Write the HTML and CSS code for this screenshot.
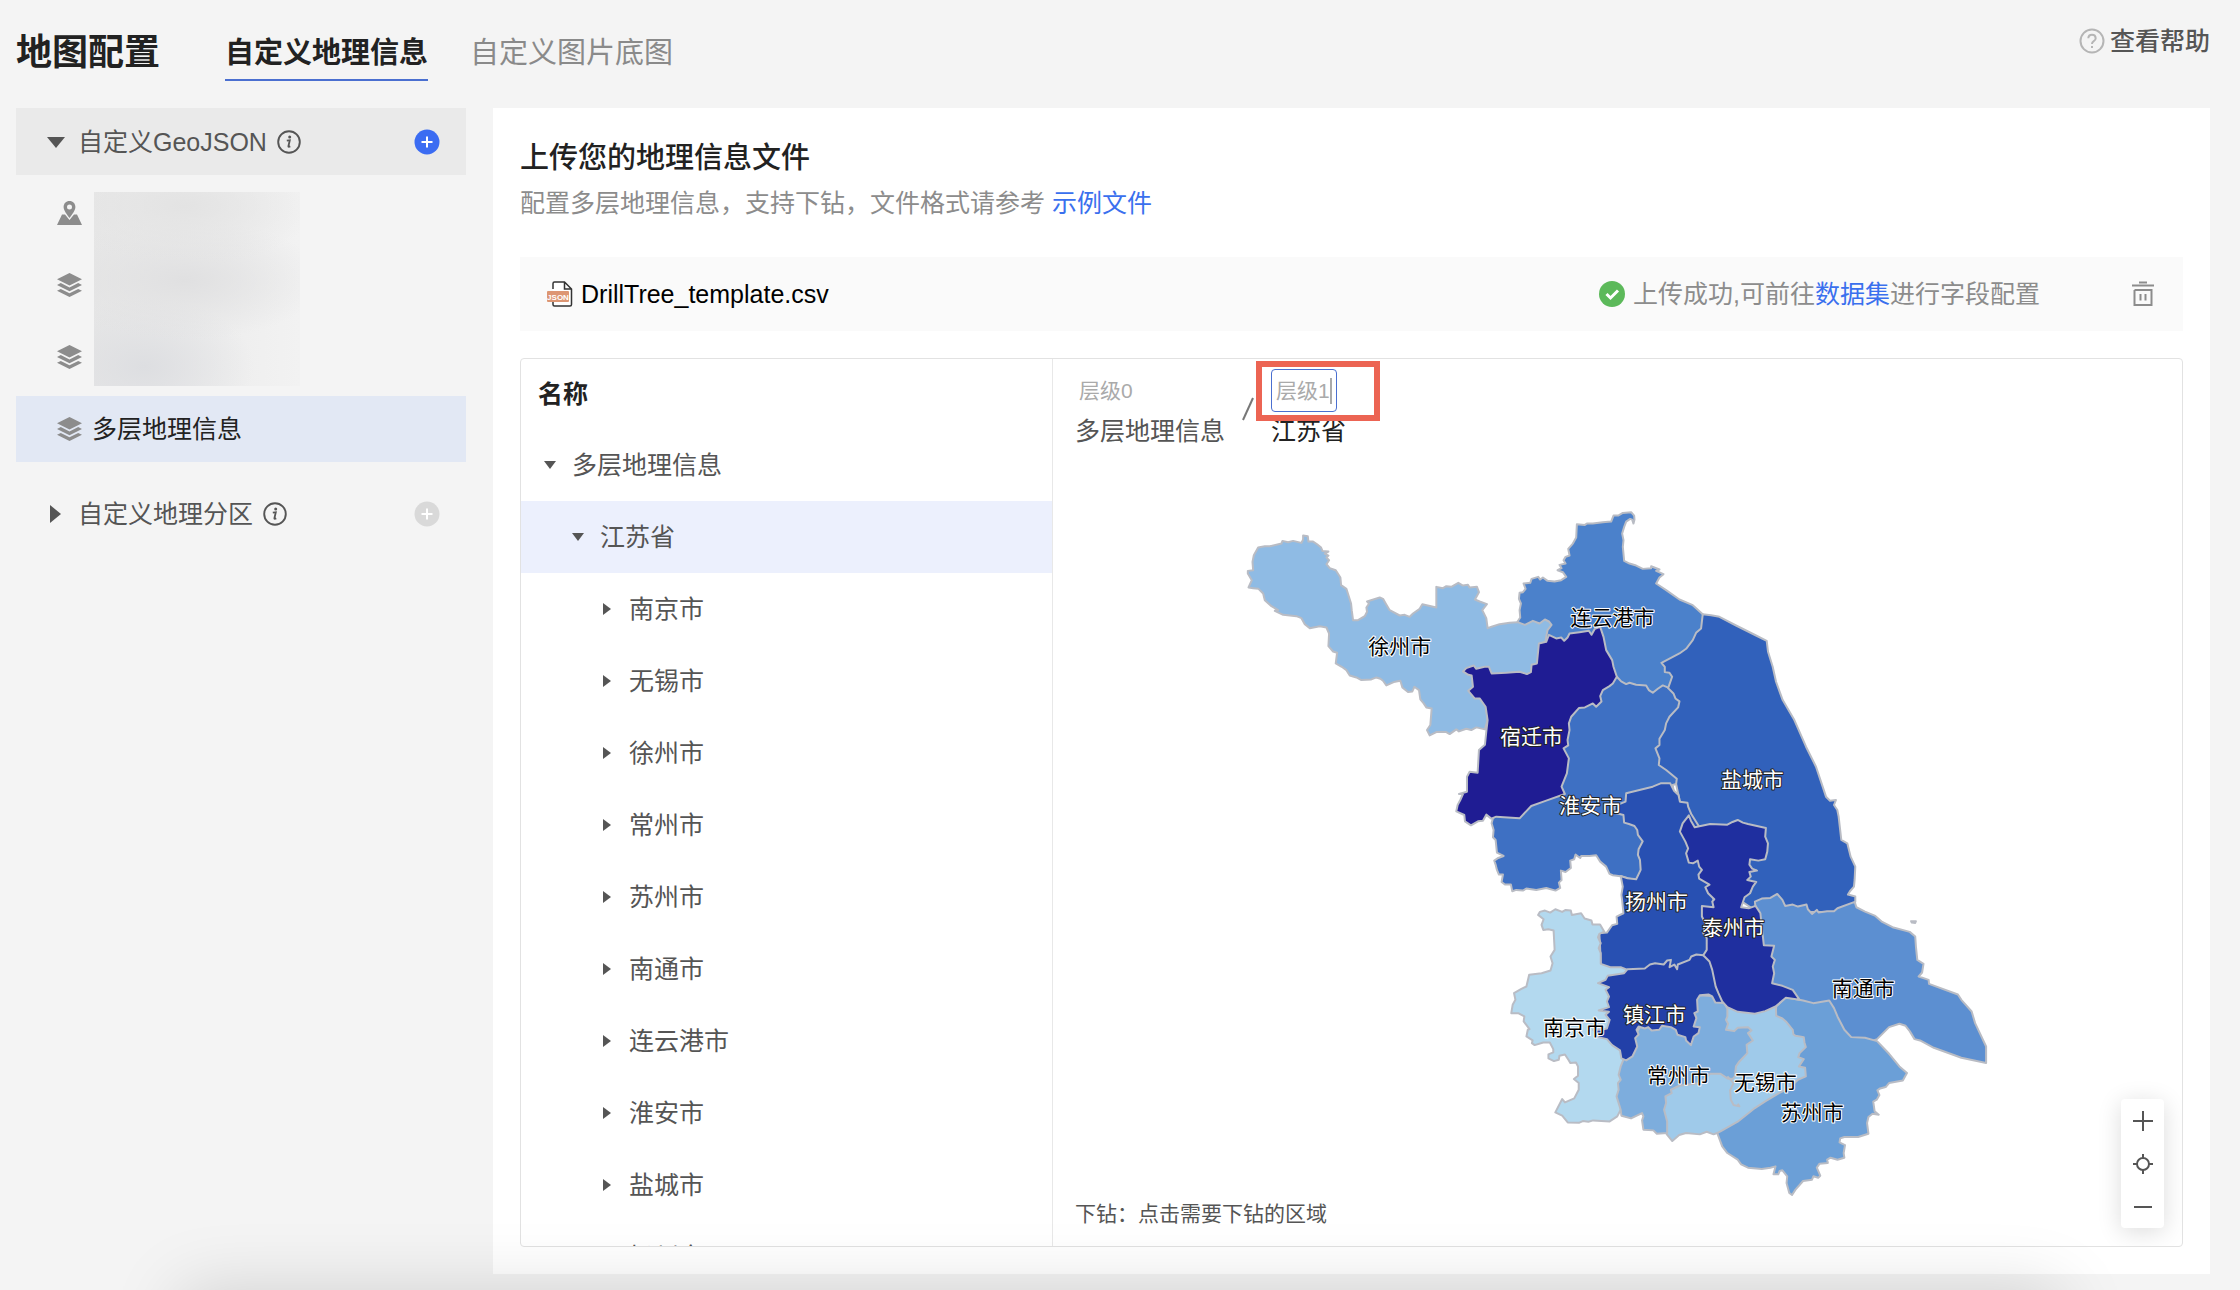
FILE: index.html
```html
<!DOCTYPE html>
<html lang="zh-CN">
<head>
<meta charset="utf-8">
<title>地图配置</title>
<link rel="stylesheet" href="styles.css">
</head>
<body>
<svg class="defs" aria-hidden="true">
  <symbol id="layers" viewBox="0 0 25 24"><path d="M12.500 0 25 6.200 12.500 12.400 0 6.200Z"/><path d="M0 12 3.800 10.100 12.500 14.400 21.200 10.100 25 12 12.500 18.200Z"/><path d="M0 17.800 3.800 15.900 12.500 20.200 21.200 15.900 25 17.800 12.500 24Z"/></symbol>
  <symbol id="info" viewBox="0 0 24 24"><circle cx="12" cy="12" r="10.800" fill="none" stroke="currentColor" stroke-width="1.900"/><circle cx="12.700" cy="7" r="1.500"/><path d="M9.800 10.600 12.800 10.200 11.400 16.300Q11.200 17.300 13.300 16.400" fill="none" stroke="currentColor" stroke-width="1.800"/></symbol>
  <symbol id="plus" viewBox="0 0 26 26"><circle cx="13" cy="13" r="12.500"/><path d="M13 7.500V18.500M7.500 13H18.500" stroke="#fff" stroke-width="2"/></symbol>
</svg>

<header class="topbar">
  <h1 class="page-title">地图配置</h1>
  <nav class="tabs">
    <a class="tab tab-active" href="#geo">自定义地理信息</a>
    <a class="tab" href="#image">自定义图片底图</a>
  </nav>
  <a class="help" href="#help">
    <svg class="icon-help" viewBox="0 0 26 26" aria-hidden="true"><circle cx="13" cy="13" r="11.500"/><path d="M9.300 10.300Q9.500 6.800 13 6.800T16.700 10.200Q16.700 12 14.500 13.300 13 14.200 13 16M13 18V20"/></svg>
    <span>查看帮助</span>
  </a>
</header>

<main class="workspace">
  <aside class="sidebar">
    <div class="group group-open">
      <svg class="twist" viewBox="0 0 18 18" aria-hidden="true"><path d="M0 4H18L9 15Z"/></svg>
      <span>自定义GeoJSON</span>
      <svg class="icon-info" aria-hidden="true"><use href="#info"/></svg>
      <button class="add" type="button" aria-label="新增GeoJSON"><svg aria-hidden="true"><use href="#plus"/></svg></button>
    </div>
    <div class="layer-list">
      <a class="layer" href="#l1" aria-label="图层一"><svg viewBox="0 0 25 24" aria-hidden="true"><path d="M5 13.500 0 24H25L20 13.500H17L12.500 19 8 13.500Z"/><path fill-rule="evenodd" d="M12.500 0C9 0 6.600 2.600 6.600 6 6.600 9.500 9.500 12.500 12.500 17 15.500 12.500 18.400 9.500 18.400 6 18.400 2.600 16 0 12.500 0ZM12.500 3.500A2.500 2.500 0 1 1 12.500 8.500 2.500 2.500 0 1 1 12.500 3.500Z"/></svg></a>
      <a class="layer" href="#l2" aria-label="图层二"><svg aria-hidden="true"><use href="#layers"/></svg></a>
      <a class="layer" href="#l3" aria-label="图层三"><svg aria-hidden="true"><use href="#layers"/></svg></a>
      <a class="layer layer-active" href="#l4"><svg aria-hidden="true"><use href="#layers"/></svg><span>多层地理信息</span></a>
      <div class="redacted"></div>
    </div>
    <div class="group">
      <svg class="twist" viewBox="0 0 18 18" aria-hidden="true"><path d="M3 0V18L14 9Z"/></svg>
      <span>自定义地理分区</span>
      <svg class="icon-info" aria-hidden="true"><use href="#info"/></svg>
      <button class="add add-off" type="button" aria-label="新增地理分区"><svg aria-hidden="true"><use href="#plus"/></svg></button>
    </div>
  </aside>

  <section class="panel">
    <h2 class="panel-title">上传您的地理信息文件</h2>
    <p class="panel-desc">配置多层地理信息，支持下钻，文件格式请参考 <a href="#sample">示例文件</a></p>

    <div class="file">
      <svg class="icon-file" viewBox="0 0 26 26" aria-hidden="true"><path d="M6 8V2.500Q6 1 7.500 1H17.500L24.500 8V23.500Q24.500 25 23 25H7.500Q6 25 6 23.500V21M17.500 1V8H24.500" fill="#fff" stroke="#333" stroke-width="1.500"/><rect x="0" y="10" width="22" height="11" rx="1" fill="#dd9673"/><text x="11" y="18.500" text-anchor="middle">JSON</text></svg>
      <span class="file-name">DrillTree_template.csv</span>
      <svg class="icon-ok" viewBox="0 0 26 26" aria-hidden="true"><circle cx="13" cy="13" r="13"/><path d="M7.500 13 11.500 17 19 9.500"/></svg>
      <p class="file-state">上传成功,可前往<a href="#dataset">数据集</a>进行字段配置</p>
      <button class="remove" type="button" aria-label="删除文件"><svg viewBox="0 0 22 26" aria-hidden="true"><path d="M0 4.500H22M7 1.500H15M2.500 9V24H19.500V9H2.500M8.500 13V19.500M13.500 13V19.500"/></svg></button>
    </div>

    <div class="explorer">
      <div class="tree">
        <h3 class="tree-head">名称</h3>
        <ul class="nodes">
          <li class="node"><svg viewBox="0 0 14 14" aria-hidden="true"><path d="M1 3H13L7 11Z"/></svg>多层地理信息</li>
          <li class="node node-l1 node-active"><svg viewBox="0 0 14 14" aria-hidden="true"><path d="M1 3H13L7 11Z"/></svg>江苏省</li>
          <li class="node node-l2"><svg viewBox="0 0 14 14" aria-hidden="true"><path d="M3 1V13L11 7Z"/></svg>南京市</li>
          <li class="node node-l2"><svg viewBox="0 0 14 14" aria-hidden="true"><path d="M3 1V13L11 7Z"/></svg>无锡市</li>
          <li class="node node-l2"><svg viewBox="0 0 14 14" aria-hidden="true"><path d="M3 1V13L11 7Z"/></svg>徐州市</li>
          <li class="node node-l2"><svg viewBox="0 0 14 14" aria-hidden="true"><path d="M3 1V13L11 7Z"/></svg>常州市</li>
          <li class="node node-l2"><svg viewBox="0 0 14 14" aria-hidden="true"><path d="M3 1V13L11 7Z"/></svg>苏州市</li>
          <li class="node node-l2"><svg viewBox="0 0 14 14" aria-hidden="true"><path d="M3 1V13L11 7Z"/></svg>南通市</li>
          <li class="node node-l2"><svg viewBox="0 0 14 14" aria-hidden="true"><path d="M3 1V13L11 7Z"/></svg>连云港市</li>
          <li class="node node-l2"><svg viewBox="0 0 14 14" aria-hidden="true"><path d="M3 1V13L11 7Z"/></svg>淮安市</li>
          <li class="node node-l2"><svg viewBox="0 0 14 14" aria-hidden="true"><path d="M3 1V13L11 7Z"/></svg>盐城市</li>
          <li class="node node-l2"><svg viewBox="0 0 14 14" aria-hidden="true"><path d="M3 1V13L11 7Z"/></svg>扬州市</li>
        </ul>
      </div>

      <div class="map">
        <svg class="map-canvas" viewBox="1053 359 1130 887" role="img" aria-label="江苏省地图">
          <g class="regions" transform="translate(1480 500) scale(.333333)">
            <path fill="#4b81cb" d="M292 72 316 74 322 70 340 70 370 66 395 64 402 46 416 46 430 38 455 36 464 46 465 58 462 70 458 58 452 56 440 64 434 80 428 100 432 120 430 140 434 182 450 190 470 196 490 206 515 204 515 198 540 208 530 212 552 222 540 232 530 250 560 270 600 298 640 315 670 342 700 400 600 520 580 560 480 620 400 560 360 400 300 420 200 440 150 400 114 364 122 352 120 330 124 310 118 296 120 278 130 276 138 266 132 250 152 248 156 236 176 230 182 238 190 232 204 242 225 244 245 240 260 230 250 216 234 210 246 204 240 194 258 190 252 180 258 170 270 166 266 146 280 130 290 112Z"/>
            <path fill="#3e70c3" d="M412 530 425 544 440 552 450 548 470 554 500 556 508 570 520 578 535 566 550 556 572 565 630 600 630 840 580 855 600 1000 500 1150 428 1130 400 1126 390 1122 380 1100 362 1085 350 1066 330 1068 305 1068 302 1074 288 1064 284 1078 272 1082 274 1104 258 1116 244 1112 246 1140 238 1148 242 1164 228 1172 200 1164 170 1170 140 1166 130 1172 110 1170 98 1174 94 1154 76 1154 66 1146 70 1124 58 1124 52 1110 48 1094 44 1082 56 1074 72 1068 52 1058 48 1020 40 1012 42 990 36 970 40 955 100 900 240 700 240 640 250 600 400 520Z"/>
          </g>
          <g class="regions" transform="translate(1230 490) scale(.333333)">
            <path fill="#8fbbe4" d="M85 172 105 168 120 168 155 160 158 152 175 156 190 152 215 158 220 148 220 136 234 138 236 154 250 154 262 162 274 172 278 182 296 184 285 190 296 196 290 202 298 210 290 222 300 234 318 240 332 262 334 285 350 296 364 340 366 360 370 390 385 390 405 378 412 365 410 352 418 340 412 334 450 322 460 326 468 340 480 360 510 376 525 374 540 380 550 370 570 356 578 342 620 352 620 290 640 294 650 288 665 290 686 278 700 286 715 284 720 292 742 290 748 306 736 328 750 334 772 342 758 360 770 384 774 414 786 410 810 402 840 398 864 396 886 404 910 392 930 400 946 388 958 394 966 404 954 420 950 440 930 560 780 620 770 660 774 690 766 718 740 712 725 720 710 716 688 724 680 718 660 732 650 726 620 726 600 736 592 720 602 705 606 655 590 652 582 640 572 628 568 600 554 590 548 604 535 606 518 592 512 572 500 574 492 576 470 586 460 572 452 566 440 562 425 568 395 570 380 562 360 556 350 540 336 530 318 520 322 488 310 484 296 468 298 430 290 412 270 408 240 414 225 402 215 384 200 378 160 374 135 362 145 360 125 348 105 330 100 310 86 296 70 294 56 292 66 270 54 250 54 242 70 240 68 215 72 195Z"/>
          </g>
          <g class="regions" transform="translate(1480 500) scale(.333333)">
            <path fill="#3161bb" d="M670 342 695 345 720 350 770 376 830 406 862 422 866 455 880 500 890 545 910 600 945 660 980 740 1010 800 1030 860 1040 890 1052 902 1070 900 1064 915 1074 930 1078 950 1086 1020 1104 1030 1114 1070 1128 1100 1126 1140 1124 1160 1112 1174 1106 1184 1128 1190 1128 1206 1100 1236 900 1236 840 1240 780 1200 780 1000 630 980 600 900 590 852 592 836 560 810 538 795 540 775 528 745 540 735 540 716 556 690 560 670 570 650 596 622 600 604 588 595 582 580 566 564 578 530 570 518 556 516 556 500 546 488 600 460 620 446 640 420 650 398 665 385Z"/>
          </g>
          <g class="regions" transform="translate(1230 490) scale(.333333)">
            <path fill="#1f1c93" d="M958 434 980 445 995 442 1004 452 1014 442 1020 430 1050 426 1078 422 1086 434 1096 416 1112 410 1122 440 1130 480 1148 510 1152 530 1162 560 1150 580 1140 588 1120 600 1112 618 1116 634 1100 650 1090 640 1066 652 1048 654 1025 680 1018 700 1020 720 1014 750 1016 766 1002 775 1018 805 1012 850 996 890 1006 912 950 932 905 948 870 985 800 980 785 986 770 974 760 992 745 994 724 1006 706 994 704 975 680 964 684 945 692 930 700 912 688 912 712 905 712 875 712 860 720 845 744 848 748 780 766 764 770 725 774 690 768 650 750 625 735 625 716 602 730 590 726 556 716 554 700 544 710 534 732 526 740 536 765 530 778 530 786 550 830 548 870 545 892 552 904 546 906 524 922 520 928 460 950 455Z"/>
          </g>
          <g class="regions" transform="translate(1480 800) scale(.344388 .333333)">
            <path fill="#5c8fd1" d="M802 325 800 305 820 296 845 294 865 282 880 300 888 318 910 314 925 320 950 314 954 328 966 342 980 330 985 338 1010 334 1030 334 1040 325 1090 306 1095 322 1120 335 1150 348 1170 366 1200 382 1250 396 1266 410 1268 440 1272 480 1290 492 1286 518 1276 530 1305 540 1306 552 1390 584 1400 600 1430 635 1440 670 1472 740 1472 790 1400 774 1320 744 1280 722 1264 718 1250 694 1238 678 1220 672 1190 682 1155 718 1100 740 1000 640 900 640 800 600 790 420Z"/>
            <path fill="#2850b2" d="M554-50 526-50 503-40 426-20 424 5 392 18 392 38 418 45 420 68 434 72 450 78 458 90 460 105 474 124 462 148 460 165 466 180 468 210 455 238 430 235 410 228 416 260 412 285 414 300 418 340 398 350 400 372 385 376 370 398 348 400 350 440 352 495 420 540 660 530 680 470 680 300 650 100 615 42 606 20 604 8 582 5 578-15 565-28Z"/>
            <path fill="#b3d9ef" d="M170 345 175 336 190 332 205 338 220 328 240 336 250 330 265 332 268 345 295 340 305 356 325 362 328 374 350 374 362 395 348 402 344 412 352 430 346 445 352 460 352 492 380 502 410 502 430 510 420 600 430 700 430 780 416 850 410 930 400 950 378 965 330 962 316 966 300 964 290 969 256 968 240 948 220 938 240 898 248 908 275 896 288 870 288 850 274 838 286 828 286 800 280 788 264 790 258 780 248 764 232 768 230 780 216 784 200 776 200 764 214 758 214 748 204 728 185 728 160 736 152 730 154 722 136 710 140 690 145 688 128 665 130 650 112 640 92 640 96 615 104 600 100 580 120 568 136 560 144 525 180 520 206 512 212 490 206 470 218 450 215 392 200 388 185 390 180 375 186 358Z"/>
            <path fill="#6b9fd7" d="M862 620 890 592 940 602 970 610 1016 602 1030 625 1040 650 1060 690 1080 712 1120 714 1155 724 1190 762 1220 800 1242 820 1230 842 1190 850 1180 862 1164 866 1156 872 1162 886 1154 900 1144 906 1148 935 1160 945 1142 942 1130 952 1126 970 1130 1002 1100 1012 1060 1012 1048 1016 1046 1028 1062 1036 1058 1060 1060 1074 1040 1080 1020 1074 1010 1080 1012 1090 988 1092 980 1104 990 1128 984 1134 970 1130 966 1140 940 1144 918 1170 908 1186 900 1180 896 1165 892 1150 894 1130 880 1112 872 1114 868 1124 854 1124 860 1100 845 1104 820 1108 780 1104 760 1094 750 1080 720 1060 705 1040 690 998 740 960 900 750 860 650Z"/>
            <path fill="#9fcaea" d="M720 620 860 600 862 648 880 656 890 665 910 690 912 704 918 708 942 712 944 728 948 742 930 760 926 772 942 778 928 800 946 804 948 830 925 840 900 865 870 880 830 905 800 925 750 966 700 995 690 1000 680 1004 660 996 640 1004 600 1000 580 1006 560 1024 544 1004 520 930 560 800 700 780 700 640Z"/>
            <path fill="#7daddd" d="M640 586 700 590 720 626 720 650 716 660 722 672 716 690 740 694 750 684 780 682 790 692 780 700 794 722 776 735 778 760 755 785 745 800 742 830 735 838 720 836 700 822 670 822 640 850 580 858 556 870 558 880 540 890 542 910 536 930 545 965 545 1000 515 1002 505 992 476 990 472 962 476 950 472 940 440 956 412 948 410 930 398 890 404 870 402 850 410 840 404 825 410 800 416 785 430 740 480 660 600 640Z"/>
            <path fill="none" d="M720 830 738 850 728 872 730 900 738 916 755 920 750 912"/>
            <path fill="#2240a8" d="M344 550 366 540 372 528 420 520 430 508 480 506 495 494 510 490 535 494 545 482 556 480 552 502 566 494 574 508 576 494 610 480 615 470 630 464 650 466 680 480 720 610 685 608 676 590 665 584 640 586 632 600 634 635 624 640 630 655 622 680 640 682 636 700 622 710 614 736 600 722 598 712 575 705 570 690 556 682 530 678 522 690 500 692 490 682 480 686 462 680 456 690 462 704 452 715 458 740 444 770 426 782 412 776 408 752 385 736 370 718 345 712 330 690 352 690 370 686 378 660 366 645 376 636 346 632 376 622 370 605 376 590 366 570 376 562Z"/>
            <path fill="#1f2f9f" d="M608 46 614 62 625 82 670 72 720 74 735 66 750 60 765 68 780 72 832 84 830 110 838 130 836 155 830 178 810 182 786 178 784 194 792 206 806 212 784 216 788 230 778 240 804 246 794 260 786 280 770 292 760 322 782 325 802 318 816 340 820 380 826 436 856 438 848 470 858 480 852 500 856 520 850 550 880 558 910 570 930 600 890 594 860 620 830 634 800 642 750 636 720 622 705 605 694 580 686 560 676 510 668 485 650 466 660 450 660 415 650 400 656 370 646 350 646 318 680 322 676 305 682 298 664 280 656 262 668 254 638 236 636 224 646 210 638 200 634 182 620 190 608 188 600 160 606 145 598 125 582 95 590 70Z"/>
            <path fill="#c2c4c8" d="M1254 364 1268 364 1266 369 1256 368Z"/>
          </g>
          <g class="labels">
            <g class="on-light">
              <text x="1400" y="654">徐州市</text>
              <text x="1613" y="625">连云港市</text>
              <text x="1864" y="996">南通市</text>
              <text x="1575" y="1035">南京市</text>
              <text x="1679" y="1083">常州市</text>
              <text x="1766" y="1090">无锡市</text>
              <text x="1813" y="1120">苏州市</text>
            </g>
            <g class="on-dark">
              <text x="1532" y="744">宿迁市</text>
              <text x="1591" y="813">淮安市</text>
              <text x="1753" y="787">盐城市</text>
              <text x="1657" y="909">扬州市</text>
              <text x="1734" y="935">泰州市</text>
              <text x="1655" y="1022">镇江市</text>
            </g>
          </g>
        </svg>

        <div class="crumbs">
          <div class="crumb">
            <span class="level">层级0</span>
            <span class="place">多层地理信息</span>
          </div>
          <svg class="slash" viewBox="0 0 12 24" aria-hidden="true"><path d="M1 23 11 1"/></svg>
          <div class="crumb crumb-now">
            <span class="level-field"><input type="text" value="层级1" aria-label="层级名称"><i class="caret"></i></span>
            <span class="place">江苏省</span>
            <span class="callout"></span>
          </div>
        </div>

        <p class="hint">下钻：点击需要下钻的区域</p>

        <div class="zoom">
          <button type="button" aria-label="放大"><svg viewBox="0 0 20 20" aria-hidden="true"><path d="M10 0V20M0 10H20"/></svg></button>
          <button type="button" aria-label="复位"><svg viewBox="0 0 20 20" aria-hidden="true"><circle cx="10" cy="10" r="6"/><path d="M10 0V4M10 16V20M0 10H4M16 10H20"/></svg></button>
          <button type="button" aria-label="缩小"><svg viewBox="0 0 20 20" aria-hidden="true"><path d="M1 10H19"/></svg></button>
        </div>
      </div>
    </div>
  </section>
</main>
<div class="edge-shade"></div>
</body>
</html>
```

FILE: styles.css
```css
* { box-sizing: border-box; }

body {
  margin: 0;
  height: 100vh;
  display: flex;
  flex-direction: column;
  overflow: hidden;
  background: #f4f4f4;
  color: #555;
  font: 25px/36px "Liberation Sans", "Noto Sans CJK SC", sans-serif;
}

h1, h2, h3, p, ul { margin: 0; padding: 0; }
a { color: #3a70ee; text-decoration: none; }
button { padding: 0; border: 0; background: none; cursor: pointer; }
svg { display: block; fill: currentColor; flex: none; }
.defs { position: absolute; width: 0; height: 0; }

/* top bar */
.topbar {
  display: flex;
  align-items: flex-start;
  min-height: 108px;
  padding: 0 30px 0 16px;
}
.page-title {
  margin-top: 32px;
  font-size: 36px;
  line-height: 42px;
  font-weight: 700;
  color: #222;
}
.tabs { display: flex; gap: 42px; margin: 32px 0 0 65px; }
.tab {
  padding-bottom: 5px;
  border-bottom: 2px solid transparent;
  font-size: 29px;
  line-height: 42px;
  color: #8a8a8a;
}
.tab-active { border-color: #4a6fd0; color: #222; font-weight: 600; }
.help {
  display: flex;
  align-items: center;
  gap: 5px;
  margin: 23px 0 0 auto;
  color: #555;
  font-weight: 500;
}
.icon-help { width: 26px; height: 26px; fill: none; stroke: #b5b5b5; stroke-width: 2; }

/* columns */
.workspace {
  flex: 1;
  min-height: 0;
  display: flex;
  gap: 27px;
  padding: 0 30px 16px 16px;
}
.sidebar { flex: none; width: 450px; }

.group {
  display: flex;
  align-items: center;
  height: 67px;
  padding: 0 26px 0 31px;
}
.group-open { background: #eaeaea; }
.group .twist { width: 18px; height: 18px; margin-right: 13px; }
.icon-info { width: 24px; height: 24px; margin-left: 10px; }
.add { margin-left: auto; color: #3b6cf2; }
.add-off { color: #d9d9d9; }
.add svg { width: 26px; height: 26px; }

.layer-list {
  position: relative;
  display: flex;
  flex-direction: column;
  gap: 6px;
  padding: 5px 0 18px;
}
.layer {
  display: flex;
  align-items: center;
  gap: 10px;
  height: 66px;
  padding-left: 41px;
  color: #222;
}
.layer svg { width: 25px; height: 24px; color: #8c8c8c; }
.layer-active { background: #e2e8f4; }
.redacted {
  position: absolute;
  left: 78px;
  top: 17px;
  width: 206px;
  height: 194px;
  background:
    radial-gradient(ellipse 130px 60px at 90px 14px, #e3e3e3, transparent),
    radial-gradient(ellipse 140px 60px at 90px 88px, #e0e0e1, transparent),
    radial-gradient(ellipse 110px 70px at 50px 175px, #dddee1, transparent),
    linear-gradient(90deg, #e7e7e7, #f2f2f2);
}

/* right panel */
.panel {
  flex: 1;
  min-width: 0;
  display: flex;
  flex-direction: column;
  padding: 30px 27px 27px;
  background: #fff;
}
.panel-title { font-size: 29px; line-height: 40px; font-weight: 500; color: #222; }
.panel-desc { margin-top: 7px; color: #8c8c8c; }

.file {
  flex: none;
  display: flex;
  align-items: center;
  height: 74px;
  margin-top: 36px;
  padding: 0 29px 0 27px;
  background: #fafafa;
}
.icon-file { width: 26px; height: 26px; }
.icon-file text { fill: #fff; font-size: 8px; font-weight: 700; }
.file-name { margin: 0 auto 0 8px; color: #000; }
.icon-ok { width: 26px; height: 26px; color: #5cb95a; }
.icon-ok path { fill: none; stroke: #fff; stroke-width: 3; }
.file-state { margin: 0 92px 0 8px; color: #8c8c8c; }
.remove svg { width: 22px; height: 26px; fill: none; stroke: #8c8c8c; stroke-width: 2; }

.explorer {
  flex: 1;
  min-height: 0;
  display: flex;
  margin-top: 27px;
  border: 1px solid #e2e2e2;
  border-radius: 4px;
  overflow: hidden;
}

/* tree */
.tree { flex: none; width: 532px; overflow: hidden; border-right: 1px solid #e8e8e8; }
.tree-head { padding-left: 17px; font-size: 25px; line-height: 70px; color: #222; }
.nodes { list-style: none; }
.node {
  display: flex;
  align-items: center;
  gap: 15px;
  height: 72px;
  padding-left: 22px;
}
.node svg { width: 14px; height: 14px; }
.node-l1 { padding-left: 50px; }
.node-l2 { padding-left: 79px; }
.node-active { background: #ecf0fd; }

/* map */
.map { position: relative; flex: 1; min-width: 0; }
.map-canvas { position: absolute; inset: 0; width: 100%; height: 100%; }
.regions path { stroke: #b9bcc4; stroke-width: 2; stroke-linejoin: round; vector-effect: non-scaling-stroke; }
.labels { font-size: 21px; text-anchor: middle; paint-order: stroke; stroke-width: 2; stroke-linejoin: round; }
.on-light { fill: #000; stroke: #fff; }
.on-dark { fill: #fff; stroke: #222; }

.crumbs { position: relative; display: flex; padding: 10px 0 0 22px; }
.crumb { display: flex; flex-direction: column; gap: 1px; }
.level, .level-field { height: 43px; font-size: 21px; line-height: 43px; color: #aaa; }
.level { padding-left: 4px; }
.place { line-height: 36px; }
.slash { width: 12px; height: 24px; margin: 28px 17px 0; fill: none; stroke: #777; stroke-width: 2; }
.crumb-now { position: relative; color: #222; }
.level-field {
  display: flex;
  align-items: center;
  width: 66px;
  padding-left: 4px;
  border: 1px solid #4a6fd0;
  border-radius: 4px;
}
.level-field input {
  width: 54px;
  padding: 0;
  border: 0;
  outline: 0;
  background: none;
  color: inherit;
  font: inherit;
  line-height: 36px;
}
.caret { width: 2px; height: 26px; background: #aaa; }
.callout {
  position: absolute;
  left: -15px;
  top: -8px;
  width: 124px;
  height: 60px;
  border: 6px solid #ec6453;
}

.hint { position: absolute; left: 22px; bottom: 14px; font-size: 21px; }

.zoom {
  position: absolute;
  right: 18px;
  bottom: 18px;
  width: 43px;
  display: flex;
  flex-direction: column;
  background: #fff;
  border-radius: 4px;
  box-shadow: 0 4px 24px rgba(0, 0, 0, .14);
}
.zoom button { display: flex; align-items: center; justify-content: center; height: 43px; }
.zoom svg { width: 20px; height: 20px; fill: none; stroke: #555; stroke-width: 2; }

/* soft shade along the bottom of the window */
.edge-shade {
  position: fixed;
  left: 180px;
  right: 180px;
  bottom: -100px;
  height: 100px;
  box-shadow: 0 0 70px rgba(0, 0, 0, .15);
  pointer-events: none;
}
```
